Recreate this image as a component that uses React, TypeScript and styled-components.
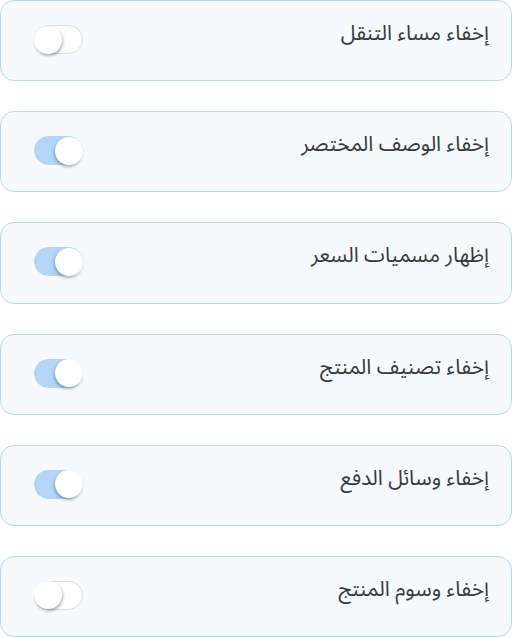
import React from "react";
import styled, { createGlobalStyle } from "styled-components";

const Global = createGlobalStyle`
  html, body { margin: 0; padding: 0; background: #ffffff; }
  body { font-family: "Noto Sans Arabic", "Noto Sans", "DejaVu Sans", sans-serif; }
`;

const List = styled.div`
  display: flex;
  flex-direction: column;
  gap: 30px;
  width: 512px;
`;

const Card = styled.div`
  box-sizing: border-box;
  height: 81.2px;
  border: 1px solid #b5d8f8;
  border-radius: 14px;
  background: #f6fafe;
  display: flex;
  direction: rtl;
  align-items: flex-start;
  justify-content: space-between;
  padding: 16px 22px 0 33px;
`;

const Label = styled.span`
  font-size: 21px;
  line-height: 32px;
  color: #383838;
`;

const Track = styled.div<{ $on: boolean }>`
  position: relative;
  box-sizing: border-box;
  width: 49px;
  height: 29px;
  margin-top: 8px;
  border-radius: 15px;
  background: ${(p) => (p.$on ? "#b3d5f8" : "#ffffff")};
  border: 1px solid ${(p) => (p.$on ? "#b3d5f8" : "#dadada")};
`;

const Knob = styled.div<{ $on: boolean }>`
  position: absolute;
  top: -0.5px;
  ${(p) => (p.$on ? "right: -1px;" : "left: -1px;")}
  width: 28px;
  height: 28px;
  border-radius: 50%;
  background: #ffffff;
  box-shadow: ${(p) =>
    p.$on
      ? "-1px 2px 3px rgba(60, 90, 130, 0.45)"
      : "1px 2px 3px rgba(0, 0, 0, 0.3)"};
`;

const items: { label: string; on: boolean }[] = [
  { label: "إخفاء مساء التنقل", on: false },
  { label: "إخفاء الوصف المختصر", on: true },
  { label: "إظهار مسميات السعر", on: true },
  { label: "إخفاء تصنيف المنتج", on: true },
  { label: "إخفاء وسائل الدفع", on: true },
  { label: "إخفاء وسوم المنتج", on: false },
];

export default function App() {
  return (
    <>
      <Global />
      <List>
        {items.map((it) => (
          <Card key={it.label}>
            <Label>{it.label}</Label>
            <Track $on={it.on}>
              <Knob $on={it.on} />
            </Track>
          </Card>
        ))}
      </List>
    </>
  );
}
